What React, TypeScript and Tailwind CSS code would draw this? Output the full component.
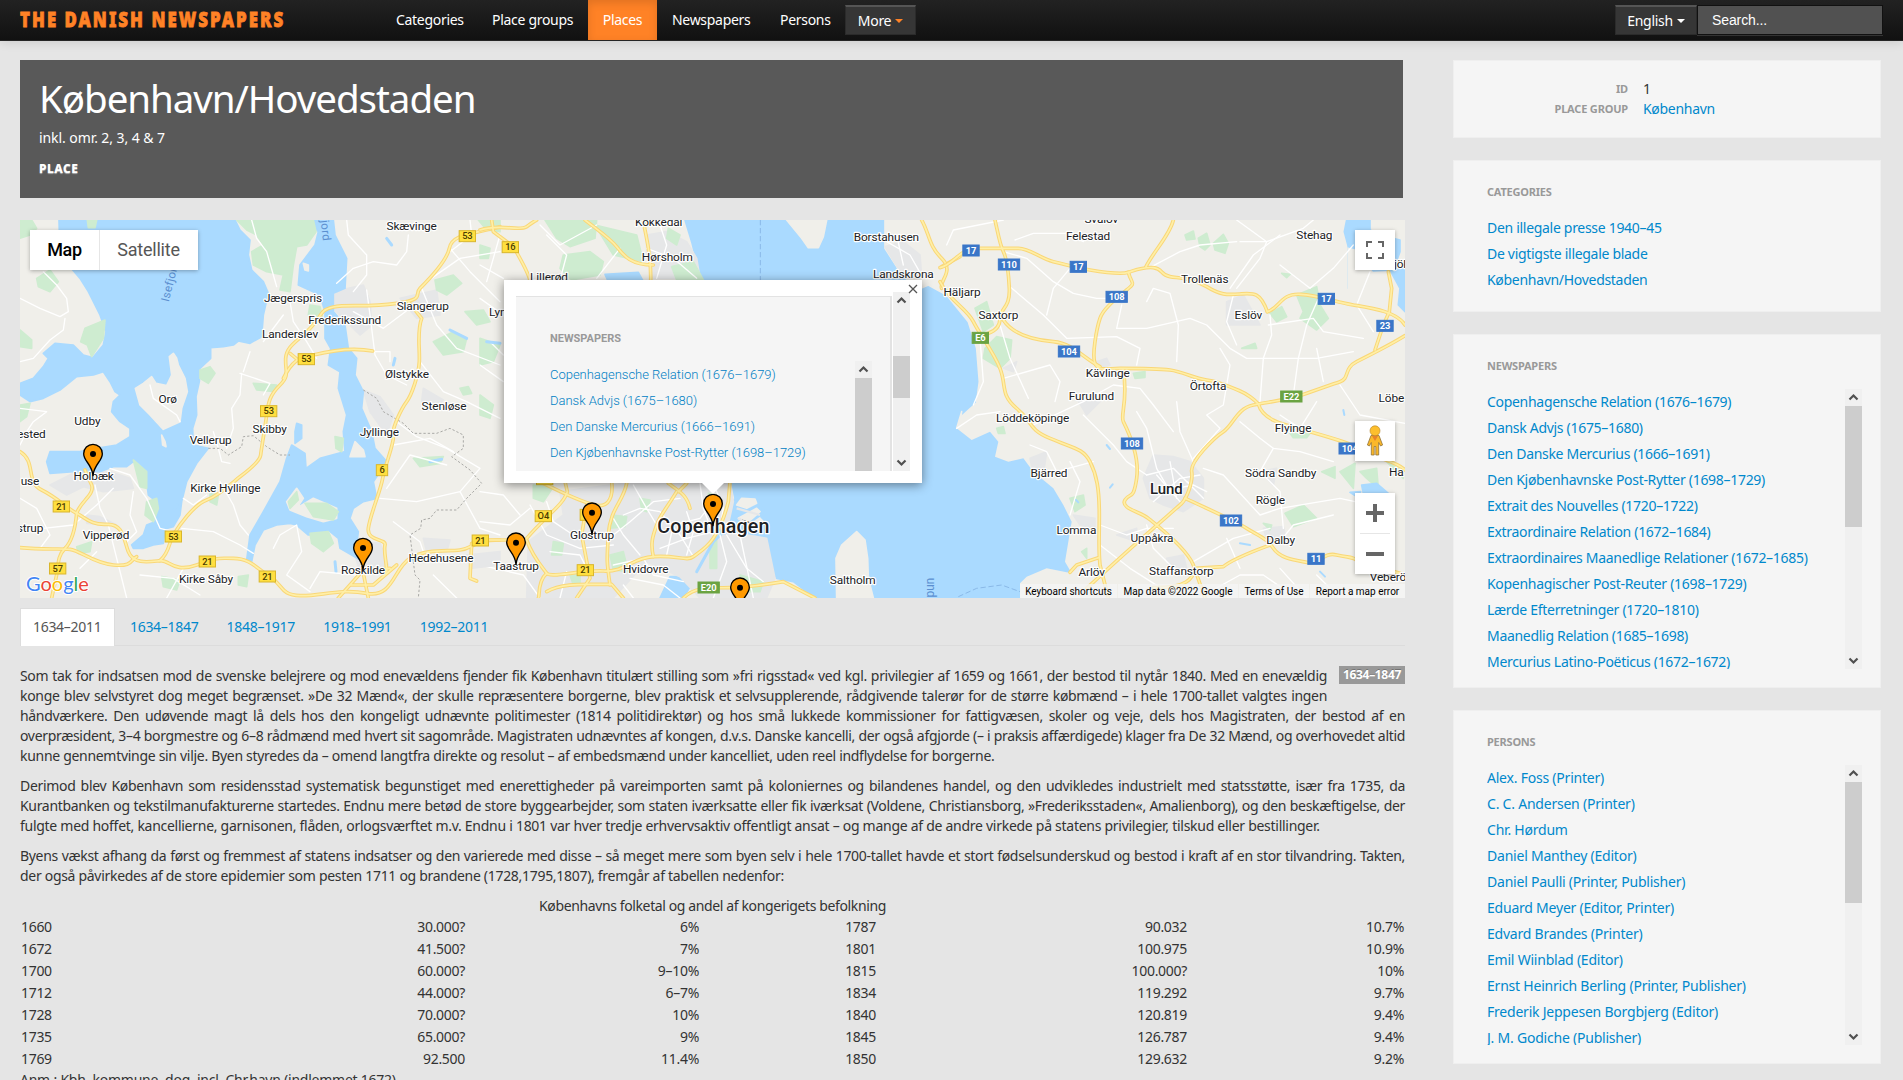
import React from "react";

type Label = [text: string, x: number, y: number];
type Shield = [text: string, x: number, y: number, kind: "y" | "b" | "g"];

/* The map is drawn on a 4155 x 1134 canvas, in three sheets with their own origins. */
const WATER_WEST = [
  "M177,15 L705,15 720,45 750,75 745,120 755,165 790,200 805,235 790,300 785,365 750,385 715,378 700,390 670,395 632,398 632,430 600,460 598,500 588,545 590,600 578,640 580,690 625,700 590,745 560,800 545,860 540,900 520,935 495,942 490,985 460,990 430,1000 400,1000 395,990 430,960 440,930 465,920 470,900 470,860 445,840 440,800 425,760 400,740 380,755 340,755 300,770 220,770 150,775 140,740 150,710 240,710 290,700 350,690 390,665 390,640 360,620 335,590 340,560 360,540 345,530 330,500 310,470 280,480 230,485 180,525 130,550 90,560 60,540 60,505 100,490 130,455 145,430 130,415 165,385 220,390 250,420 278,428 310,390 318,350 300,300 265,230 240,190 180,120 Z",
  "M920,15 L1000,15 1005,60 1040,130 1035,220 1000,235 1000,290 1035,330 1045,400 1070,430 1065,480 1090,530 1085,580 1115,650 1125,700 1160,740 1120,800 1130,850 1090,860 1060,880 1050,910 1075,950 1070,990 1090,1040 1020,1000 1015,970 985,945 960,960 925,960 890,930 870,925 830,930 790,945 765,990 755,1040 740,1035 750,960 790,890 840,800 860,730 875,690 915,715 918,760 960,730 1035,710 1030,650 1040,600 1015,520 1020,470 985,450 992,400 975,370 975,290 960,240 895,210 900,150 945,90 955,50 Z",
  "M885,650 L890,625 905,630 905,670 885,685 Z",
];
const LAND_WEST = [
  "M508,425 L520,415 530,430 535,450 555,490 562,530 545,580 540,620 490,643 450,600 420,570 406,520 430,505 455,485 468,505 500,512 515,480 Z",
  "M1050,725 L1065,680 1090,705 1095,725 Z",
  "M485,660 L495,680 498,695 488,690 Z",
  "M860,860 L890,820 910,850 890,880 940,850 1010,880 1010,910 970,920 920,905 870,885 Z",
  "M910,145 L925,150 925,168 915,165 Z",
];
const PARK_WEST = [
  "M710,15 L940,15 948,50 920,90 890,95 880,150 870,230 840,225 850,180 800,170 760,150 755,110 790,90 770,60 740,45 Z",
  "M262,15 L290,15 285,38 265,38 Z", "M60,15 L95,15 110,40 90,60 60,70 Z", "M110,190 L150,165 175,200 150,230 115,215 Z",
  "M255,340 L315,315 310,370 275,425 262,390 242,380 Z", "M60,345 L95,375 95,400 60,395 Z",
  "M600,465 L630,455 645,475 625,505 600,490 Z", "M400,735 L440,770 440,820 420,815 Z", "M440,860 L470,850 475,880 460,920 435,900 Z",
  "M915,865 L980,865 1015,890 1000,915 940,905 Z", "M930,955 L985,950 1000,985 970,1010 935,985 Z", "M865,860 L890,830 895,855 870,880 Z",
  "M1305,195 L1360,180 1385,205 1340,240 1310,225 Z", "M1300,380 L1360,350 1400,370 1390,410 1330,420 Z", "M1395,290 L1450,285 1470,320 1430,330 Z",
  "M930,270 L960,275 970,320 940,330 925,300 Z", "M60,570 L90,565 80,605 60,620 Z", "M230,995 L275,980 270,1010 235,1015 Z",
  "M1240,730 L1330,725 1320,745 1260,755 Z", "M1005,665 L1030,670 1025,710 1008,700 Z", "M760,505 L830,510 825,530 770,525 Z",
  "M485,1085 L540,1095 530,1125 490,1115 Z", "M630,830 L655,840 650,870 630,860 Z", "M715,1085 L745,1080 740,1115 715,1110 Z",
  "M1435,15 L1500,15 1500,50 1460,45 Z", "M1380,520 L1405,515 1415,535 1390,540 Z",
];
const URBAN_WEST = [
  "M150,810 L220,775 330,770 390,790 400,820 310,830 250,815 200,840 Z", "M975,235 L1090,210 1110,260 1115,330 1080,360 1030,310 1000,280 Z",
  "M1090,525 L1140,545 1180,600 1160,660 1110,590 Z", "M1050,975 L1140,985 1165,1050 1080,1070 Z", "M1270,520 L1330,555 1310,580 1265,560 Z",
  "M1200,250 L1310,225 1320,300 1250,310 Z", "M1270,970 L1350,975 1340,1010 1280,1010 Z", "M1400,1020 L1500,1010 1500,1050 1410,1060 Z", "M260,900 L300,905 350,930 260,925 Z",
];
const ROAD_WEST = [
  "M60,710 C110,740 75,800 125,825 S200,880 230,895 S270,930 320,928 S370,970 385,1010 S450,1040 480,1037 S520,1075 590,1050 S650,1030 700,1030 S770,1060 810,1085 S840,1140 900,1142 S1020,1120 1100,1135 S1180,1060 1230,1030 S1340,1010 1380,1005 S1420,975 1500,975",
  "M60,998 C130,1005 180,1000 210,1003 S280,1045 340,1050 S390,1035 410,1025", "M230,895 C225,950 215,980 195,1000 S175,1040 172,1070 L155,1149",
  "M230,895 C240,860 285,840 275,810 L255,765", "M480,1037 C510,1010 505,985 520,960 S580,870 620,855 S700,800 720,785 S780,740 782,720 S795,640 800,600 S810,540 840,510 S855,470 857,430 S900,375 935,335 S960,285 1000,276 S1100,278 1190,265 S1240,240 1260,220 S1340,140 1348,100 S1400,60 1500,35",
  "M850,490 C880,430 900,430 940,420 S1050,395 1118,408", "M870,415 L900,440", "M1225,260 L1265,310 C1250,350 1260,400 1258,440 S1235,540 1220,560 S1175,640 1180,660 S1155,750 1148,790 S1110,900 1105,940 S1160,970 1155,990 S1160,1040 1160,1070",
  "M1015,1149 L1090,1065 1170,1060 M1050,1110 L1120,1110 1190,1050 M1085,1050 L1105,1149", "M1415,985 L1410,1090 1430,1098",
];
const MINOR_WEST = [
  "M60,250 L120,280 180,305 205,290 200,250 170,210 130,170", "M60,440 L100,430 150,375 190,345 195,310", "M60,580 L140,590 100,620 80,650 60,690",
  "M755,15 L770,70 800,110 820,180 830,215", "M1040,15 L1045,60 1100,120 1100,180 1060,230", "M1010,205 L1060,160 1120,140 1190,150 1220,110 1225,60",
  "M1100,225 L1110,300 1125,420 1160,480 1220,510", "M850,300 L790,380", "M870,260 L880,320 920,380 950,430", "M725,475 L720,540 695,580 700,640 680,700",
  "M720,475 L810,505 790,540", "M750,410 L730,470", "M450,510 L460,550 530,600 540,620", "M660,800 L700,870 720,930 745,960",
  "M545,940 L640,950 720,990 760,1015", "M330,760 L390,780 440,850 480,940 520,950", "M285,810 L300,880 325,930 345,1010 380,1149",
  "M130,940 L220,930 290,870 340,820", "M60,850 L110,880 150,960 120,1000", "M240,1060 L290,1010", "M420,1080 L520,1090 600,1140",
  "M550,1060 L500,1149", "M820,1000 L840,960 890,930 905,1010 860,1080 930,1130", "M930,1120 L960,1070 1070,1080", "M1140,850 L1250,860 1380,830 1440,760 1340,700 1250,665 1190,620",
  "M1180,690 L1290,670 1360,710", "M1160,820 L1230,720 1340,750", "M1180,920 L1260,980 1280,1040", "M1260,440 L1330,530 1400,560 1500,610",
  "M1265,220 L1310,330 1370,400 1500,450", "M1350,100 L1410,170 1500,260", "M1280,200 L1380,130 1500,110", "M1230,280 L1150,340 1060,290",
  "M1410,15 L1415,60 1350,110", "M1120,410 L1170,410 1170,440", "M1300,1080 L1370,1149", "M400,830 L390,900 410,950 380,980", "M550,850 L580,870 620,840", "M1380,830 L1440,940 1500,960", "M640,650 L655,700 665,740 690,745",
];
const WATER_EAST = [
  "M615,15 L2600,15 2600,220 1380,220 1420,265 1465,320 1490,400 1498,500 1490,560 1440,605 1430,640 1475,675 1530,650 1555,680 1545,725 1585,740 1630,730 1660,770 1720,820 1750,870 1775,920 1765,980 1755,1040 1775,1075 1700,1060 1640,1085 1620,1105 1620,1149 1005,1149 940,1100 890,1090 860,1030 850,985 830,960 760,960 740,930 755,870 765,850 755,800 720,500 660,180 635,80 Z",
  "M540,1149 L570,1085 600,1085 645,1090 610,1149 Z", "M375,178 L475,172 490,200 385,200 Z", "M640,1060 L700,975 690,1000 650,1060 Z",
];
const LAND_EAST = [
  "M1215,15 L2600,15 2600,600 1490,560 1498,500 1490,400 1465,320 1420,265 1400,240 1345,210 1310,225 1260,170 1215,100 Z",
  "M920,15 L1040,15 1030,65 1015,98 985,98 965,70 Z", "M1070,1149 L1068,1030 1085,990 1130,950 1155,975 1163,1030 1165,1090 1180,1149 Z",
  "M770,870 L785,850 825,852 830,865 800,880 Z", "M775,910 L830,880 840,890 800,925 Z", "M815,925 L845,905 850,915 830,935 Z", "M1430,640 L1445,590 1440,620 Z",
];
const PARK_EAST = [
  "M195,15 L350,15 345,70 270,95 230,70 Z", "M250,120 L330,110 370,140 360,180 275,195 240,160 Z", "M345,30 L470,60 490,140 400,120 Z", "M575,155 L640,140 670,195 590,195 Z",
  "M565,40 L600,60 590,90 560,70 Z", "M0,90 L30,100 25,130 0,130 Z", "M0,370 L60,390 40,440 0,450 Z", "M390,1020 L430,1010 445,1070 400,1065 Z",
  "M395,900 L440,905 435,935 385,940 Z", "M480,850 L510,855 500,890 485,885 Z", "M270,1080 L300,1080 300,1110 280,1110 Z", "M780,1080 L850,1100 840,1130 790,1130 Z",
  "M0,540 L40,570 30,610 0,600 Z", "M160,810 L220,815 190,860 160,850 Z", "M220,980 L250,985 245,1020 215,1020 Z", "M685,835 L710,840 705,865 690,860 Z", "M690,990 L710,960 710,1060 690,1060 Z",
];
const URBAN_EAST = [
  "M140,1149 L145,980 250,900 240,830 430,805 750,805 760,860 740,950 860,970 885,1090 860,1149 660,1149 600,1085 500,1040 400,1149 Z", "M500,60 L560,50 620,80 650,130 660,190 520,190 500,120 Z",
  "M1215,95 L1270,80 1320,120 1325,185 1260,170 Z",
];
const ROAD_EAST = [
  "M0,45 C60,25 120,50 140,35 S160,20 170,15", "M35,15 L40,50 100,95 C120,130 150,180 150,200", "M315,15 C360,50 390,70 410,95 S450,150 520,150", "M490,15 C495,60 515,110 512,200",
  "M1325,15 C1350,60 1345,90 1385,130 S1375,200 1385,220", "M1385,155 L1440,125", "M140,970 C200,900 250,870 262,830 L255,800", "M0,975 L140,975 C160,1030 190,1060 200,1075 S300,1065 370,1068 S450,1030 520,1025 S620,1040 640,1025 S680,1000 700,970 S735,900 745,860 L750,800",
  "M200,1075 C170,1100 180,1149 175,1149", "M200,1130 C250,1100 330,1110 395,1108 L430,1149", "M440,805 C430,860 390,880 385,960 S380,1040 390,1110", "M190,805 C240,830 300,860 345,870 S400,840 395,800",
  "M590,830 C560,880 540,900 530,930 S510,980 520,1025", "M565,805 C600,830 620,840 630,880 M620,805 L595,830", "M290,1149 L330,1090 305,960 320,870", "M610,1149 C650,1110 700,1120 750,1118 S850,1110 910,1100 L1005,1149",
];
const MINOR_EAST = [
  "M430,900 L480,880 540,890 600,960 640,1025", "M400,960 L450,920 520,860 600,850", "M460,810 L500,880 530,930", "M480,1020 L430,960 400,910", "M560,1020 L580,930 660,910 700,860",
  "M660,805 L670,880 700,960", "M700,805 L730,880 720,940", "M540,1000 L620,970 700,950", "M620,890 L640,950 620,1020", "M150,870 L200,960 300,1000 400,990", "M210,1010 L300,1020 320,1060",
  "M240,1149 L260,1070", "M430,1110 L460,1149", "M450,1090 L550,1110 600,1149", "M700,1149 L740,1040 720,960", "M740,960 L800,1060 850,1100", "M780,960 L820,1149", "M200,860 L220,920 280,960",
  "M0,1050 L130,1080 180,1149", "M0,920 L90,930 150,880", "M0,830 L70,840 120,900", "M0,150 L70,190", "M200,60 L260,120 240,195", "M60,60 L20,200", "M180,30 L240,90 350,30", "M420,100 L350,190",
  "M500,100 L580,130 650,190", "M540,30 L560,90 530,190", "M1220,80 L1290,120 1330,190", "M1250,60 L1270,150", "M0,250 L70,300", "M0,450 L70,500", "M30,380 L70,420", "M400,1050 L490,1030 520,1080 610,1100",
];
const PARK_FAR = [
  "M735,60 L760,48 765,72 740,75 Z", "M775,70 L800,55 810,90 795,105 780,95 Z", "M820,85 L850,58 865,85 855,115 825,105 Z", "M1070,240 L1130,215 1140,270 1165,310 1130,345 1080,310 1090,290 Z",
  "M990,295 L1025,275 1040,305 1010,320 Z", "M135,400 L170,365 215,375 210,430 180,460 130,430 Z", "M105,280 L140,260 160,330 130,350 Z", "M580,475 L615,470 615,487 585,490 Z", "M1035,895 L1090,870 1130,910 1060,935 Z",
  "M1145,770 L1185,755 1185,790 Z", "M1200,770 L1245,745 1240,820 Z", "M1260,770 L1310,760 1315,820 1280,790 Z", "M390,850 L430,840 435,870 405,890 Z", "M905,400 L945,385 950,400 Z",
  "M970,925 L995,930 990,945 Z", "M425,1010 L440,1000 440,1030 Z", "M1050,655 L1110,655 1100,668 1060,668 Z", "M170,640 L190,635 195,655 175,655 Z", "M1340,740 L1390,770 1390,790 Z", "M1025,175 L1050,178 1040,188 Z",
];
const URBAN_FAR = [
  "M610,790 L640,720 700,725 750,740 790,790 790,850 730,890 670,870 630,850 Z", "M860,260 L910,240 960,330 860,330 Z", "M270,730 L320,710 310,780 280,780 Z", "M400,900 L465,910 465,940 420,930 Z",
  "M530,960 L590,940 590,980 Z", "M680,1030 L730,1020 740,1060 690,1060 Z", "M970,940 L1030,935 1040,980 980,970 Z", "M960,770 L1010,760 1000,810 Z", "M410,550 L480,560 440,600 Z", "M190,460 L230,440 220,470 Z", "M470,440 L500,430 510,450 480,460 Z",
];
const WATER_FAR = [
  "M1220,15 L1290,15 1290,45 1320,60 1380,75 1380,110 1360,165 1300,168 1245,100 1225,95 1213,50 Z", "M1350,165 L1395,160 1395,290 1375,270 1380,220 Z", "M1265,810 L1310,805 1345,835 1270,835 Z", "M1230,832 L1262,830 1250,845 Z",
];
const ROAD_FAR = [
  "M0,158 C40,150 60,100 110,100 S200,100 235,100 S300,130 340,140 S420,160 450,165 S540,180 565,172 S610,155 640,158 S660,180 690,185 S760,190 800,215 S860,240 900,237 S960,230 982,290",
  "M982,290 C1020,280 1020,235 1080,238 S1180,260 1240,270 S1370,290 1395,330", "M165,15 C175,60 180,90 190,110 S205,160 208,220 S180,280 180,310 S160,350 145,355",
  "M0,200 C30,260 80,280 100,320 S160,410 180,460 S180,540 230,580 S260,640 330,670 S430,700 450,740 S478,820 478,900 S475,1000 480,1050 L505,1149",
  "M700,15 C690,60 640,110 618,155", "M565,172 C575,210 590,200 560,225 S490,280 480,310 S455,420 465,445 S500,460 540,460 S650,460 690,465 S760,490 800,495 S880,520 900,528 S945,555 955,567",
  "M190,315 C220,360 280,375 340,380 S430,430 480,455", "M550,465 C565,560 540,600 550,620 S600,720 590,790 S570,830 555,855 S600,890 625,910 S740,1000 760,1050 L795,1149",
  "M1395,362 C1350,390 1290,420 1250,440 S1230,490 1200,500 S1130,525 1085,540 S990,560 940,570 S880,630 850,650 S750,740 755,770 S740,850 725,865 S590,980 440,1120",
  "M955,567 C970,620 1040,630 1110,650 S1250,690 1280,710 S1370,740 1395,765", "M735,850 C800,880 880,915 920,940 S980,970 1000,1000 S1060,1035 1100,1042 S1150,1010 1190,1020 S1230,1020 1260,1040 L1380,1075",
  "M990,990 C950,1005 880,1030 850,1055 L765,1060 C760,1090 740,1120 640,1118", "M475,1028 L410,1050 390,1072", "M1345,170 L1355,220 1348,290 1330,330 1305,405",
];
const MINOR_FAR = [
  "M20,90 L40,45 190,15", "M190,110 L260,130 340,200 400,235 470,250 545,250", "M225,75 L280,55 380,55 430,80", "M390,160 L340,220 320,300", "M210,215 L310,300 380,370 530,365 600,400 590,450",
  "M620,260 L640,220 690,235 715,330 710,440", "M545,270 L530,340 620,340 750,310 800,330 870,400 920,430 1130,430 1240,410", "M880,240 L860,320 890,390", "M990,300 L995,360 970,430 960,560",
  "M985,330 L1120,310 1150,350 1270,370", "M1060,540 L1075,430 1100,330 1140,240", "M1130,400 L1150,500", "M625,160 L720,110 780,90 890,80", "M900,80 L980,80 1090,40 1120,15", "M870,220 L940,120 1020,60",
  "M890,15 L980,80 960,130 890,220", "M1020,150 L1110,220 1180,160 1240,90", "M180,330 L210,430 265,550", "M120,370 L130,500 100,570", "M190,490 L330,450 360,500 345,560", "M280,630 L430,560 520,510 600,520 640,570 700,650",
  "M430,600 L520,690 560,740 620,780", "M590,590 L620,640 650,760 690,830", "M620,780 L700,760 790,850", "M640,860 L720,790 780,780", "M650,780 L720,860 M660,830 L760,810 M690,740 L710,850 M740,800 L800,830", "M790,760 L850,780 960,900 1020,880 1200,850 1245,860",
  "M710,560 L720,650 760,740", "M760,730 L840,640 800,600 850,570 870,450 840,400", "M900,620 L960,670 1000,700 1080,710 1180,740", "M1000,700 L960,770 1020,830 1030,940", "M1020,600 L1080,640 1130,560",
  "M1200,510 L1260,600 1395,625", "M460,740 L350,770 320,710 270,690", "M480,930 L560,960 620,940 700,940", "M480,990 L570,1060 680,1130", "M620,930 L640,1000 700,1060 760,1080", "M760,1040 L880,970 990,940",
  "M810,1130 L900,1080 970,1080 1070,1149", "M1020,1060 L1100,1149", "M1200,1149 L1130,1080", "M390,900 L420,800 390,740", "M50,640 L110,600 180,590", "M1290,170 L1250,270 1300,350", "M1020,980 L1060,930 1180,900", "M860,970 L900,1060",
];

const LABELS_WEST: Label[] = [
  ["Skævinge", 1235, 45], ["Jægerspris", 879, 262], ["Slangerup", 1268, 286], ["Frederikssund", 1034, 327], ["Landerslev", 870, 370], ["Ølstykke", 1221, 490],
  ["Stenløse", 1332, 586], ["Orø", 503, 565], ["Udby", 262, 631], ["ested", 94, 670], ["Skibby", 809, 655], ["Vellerup", 632, 688], ["Jyllinge", 1138, 664],
  ["Holbæk", 281, 796], ["use", 90, 811], ["Kirke Hyllinge", 676, 832], ["strup", 90, 950], ["Vipperød", 318, 973], ["Hedehusene", 1323, 1042], ["Roskilde", 1089, 1078], ["Kirke Såby", 618, 1105],
];
const LABELS_EAST: Label[] = [
  ["Kokkedal", 536, 34], ["Hørsholm", 562, 139], ["Lillerød", 207, 198], ["Lynge", 72, 304], ["Borstahusen", 1219, 79], ["Landskrona", 1270, 190],
  ["Glostrup", 336, 973], ["Taastrup", 108, 1064], ["Hvidovre", 497, 1075], ["Saltholm", 1118, 1108],
];
const LABELS_FAR: Label[] = [
  ["Svalöv", 484, 24], ["Felestad", 444, 76], ["Stehag", 1123, 73], ["Häljarp", 66, 244], ["Saxtorp", 175, 313], ["Trollenäs", 794, 205], ["Eslöv", 925, 313], ["Kävlinge", 503, 487],
  ["Örtofta", 804, 525], ["Furulund", 454, 556], ["Löddeköpinge", 278, 622], ["Löbe", 1354, 562], ["Flyinge", 1059, 652], ["Bjärred", 327, 787], ["Södra Sandby", 1022, 787], ["Ha", 1369, 784],
  ["Rögle", 991, 868], ["Lomma", 409, 958], ["Uppåkra", 636, 982], ["Dalby", 1022, 988], ["Arlöv", 455, 1083], ["Staffanstorp", 724, 1081], ["Veberö", 1344, 1098], ["jöl", 1380, 160],
];
const SHIELDS_WEST: Shield[] = [
  ["53", 1402, 63, "y"], ["53", 919, 432, "y"], ["53", 806, 588, "y"], ["6", 1146, 765, "y"], ["21", 184, 874, "y"], ["53", 520, 964, "y"], ["21", 1441, 976, "y"], ["21", 622, 1039, "y"], ["57", 173, 1060, "y"], ["21", 802, 1084, "y"],
];
const SHIELDS_EAST: Shield[] = [["16", 91, 96, "y"], ["O4", 190, 903, "y"], ["21", 316, 1065, "y"], ["", 325, 899, "y"], ["", 194, 792, "y"], ["E20", 686, 1117, "g"]];
const SHIELDS_FAR: Shield[] = [
  ["17", 93, 106, "b"], ["110", 207, 148, "b"], ["17", 415, 155, "b"], ["108", 530, 245, "b"], ["17", 1159, 251, "b"], ["23", 1335, 332, "b"], ["E6", 121, 368, "g"], ["104", 387, 409, "b"],
  ["E22", 1054, 544, "g"], ["108", 576, 685, "b"], ["104", 1229, 700, "b"], ["102", 873, 916, "b"], ["11", 1128, 1031, "b"],
];

function Areas({ d, fill }: { d: string[]; fill: string }) {
  return <>{d.map((p, i) => <path key={i} d={p} fill={fill} stroke={fill} strokeWidth="5" strokeLinejoin="round" />)}</>;
}
function Lines({ d, color, width }: { d: string[]; color: string; width: number }) {
  return <>{d.map((p, i) => <path key={i} d={p} fill="none" stroke={color} strokeWidth={width} strokeLinejoin="round" strokeLinecap="round" />)}</>;
}
function Roads({ d }: { d: string[] }) {
  return (
    <>
      <Lines d={d} color="#f9d778" width={11} />
      <Lines d={d} color="#ffefa6" width={5} />
    </>
  );
}
function Labels({ items }: { items: Label[] }) {
  return (
    <g fontFamily="Roboto, sans-serif" fontSize="35.5" fill="#202124" stroke="#fff" strokeWidth="7" strokeLinejoin="round" paintOrder="stroke" textAnchor="middle">
      {items.map(([t, x, y]) => <text key={t} x={x} y={y}>{t}</text>)}
    </g>
  );
}
const SHIELD_COLOR = { y: ["#ffdf40", "#d9b62c", "#4a3c00"], b: ["#3a76c8", "#3a76c8", "#fff"], g: ["#6ba342", "#6ba342", "#fff"] };
function Shields({ items }: { items: Shield[] }) {
  return (
    <g fontFamily="Roboto, sans-serif" fontSize="28" textAnchor="middle">
      {items.map(([t, x, y, k], i) => {
        const w = t.length === 1 ? 34 : t.length === 3 ? 64 : 49;
        const c = SHIELD_COLOR[k];
        return (
          <g key={i}>
            <rect x={x - w / 2} y={y - 16} width={w} height="33" fill={c[0]} stroke={c[1]} strokeWidth="3" />
            {t && <text x={x} y={y + 10} fill={c[2]} fontWeight={k === "y" ? 500 : 700}>{t}</text>}
          </g>
        );
      })}
    </g>
  );
}
function Pins({ at }: { at: [number, number][] }) {
  return (
    <>
      {at.map(([x, y], i) => (
        <g key={i} transform={`translate(${x} ${y})`}>
          <path d="M0,65 C-3,30 -28,22 -28,-1 A28,28 0 0 1 28,-1 C28,22 3,30 0,65 Z" fill="#ff9900" stroke="#000" strokeWidth="4" strokeLinejoin="round" />
          <circle r="9" fill="#000" />
        </g>
      ))}
    </>
  );
}

const WEST = "translate(-60 -15)";
const EAST = "translate(1380 -15)";
const FAR = "translate(2760 -15)";

function MapCanvas() {
  return (
    <svg viewBox="0 0 4155 1134" preserveAspectRatio="none" className="block h-full w-full">
      <rect width="4155" height="1134" fill="#f0efea" />
      <g transform={EAST}>
        <Areas d={WATER_EAST} fill="#aadaff" />
        <Areas d={LAND_EAST} fill="#f0efea" />
        <path d="M2600,15 V1149 H1860 L1620,1149 1620,1105 1640,1085 1700,1060 1775,1075 1755,1040 1765,980 1775,920 1750,870 1720,820 1660,770 1630,730 1585,740 1545,725 1555,680 1530,650 1475,675 1430,640 1440,605 1490,560 1498,500 1490,400 1465,320 1420,265 1800,15 Z" fill="#f0efea" />
        <Areas d={URBAN_EAST} fill="#e6e7e8" />
        <Areas d={PARK_EAST} fill="#ceecd0" />
        <path d="M775,910 L800,925 835,930 M770,880 L840,900" stroke="#e6e7e8" strokeWidth="7" />
        <Lines d={["M650,1070 L700,980 730,950", "M860,960 L870,930 845,905 850,880", "M700,935 L735,955"]} color="#aadaff" width={9} />
        <Lines d={MINOR_EAST} color="#fff" width={4} />
        <path d="M841,15 V200" stroke="#8ab9e8" strokeWidth="3" strokeDasharray="16 8" />
      </g>
      <g transform={WEST}>
        <Areas d={URBAN_WEST} fill="#e6e7e8" />
        <Areas d={WATER_WEST} fill="#aadaff" />
        <Areas d={LAND_WEST} fill="#f0efea" />
        <Areas d={PARK_WEST} fill="#ceecd0" />
        <Lines d={["M1160,70 L1175,90", "M1350,345 L1400,370", "M1460,380 L1500,385", "M1185,430 L1180,450", "M1290,740 L1325,733", "M1255,1020 L1240,1035", "M1005,1040 L1008,1070", "M520,890 L530,870"]} color="#aadaff" width={9} />
        <Lines d={MINOR_WEST} color="#fff" width={4} />
        <path d="M1090,525 L1130,550 1150,590 1210,625 1240,655 1310,655 1350,640 1390,660 1390,700 1355,725 1410,765 1445,805 1400,850 1370,885 1310,885 1290,910 1265,915 1262,940 1230,960 1245,1080 1260,1095 1255,1149 M625,700 L660,700 685,720 725,695 730,665 760,662 800,695 840,720 870,720" fill="none" stroke="#a9a9a6" strokeWidth="3" strokeDasharray="7 6" />
        <Roads d={ROAD_WEST} />
      </g>
      <g transform={EAST}>
        <Roads d={ROAD_EAST} />
      </g>
      <g transform={FAR}>
        <Areas d={URBAN_FAR} fill="#e6e7e8" />
        <Areas d={PARK_FAR} fill="#ceecd0" />
        <Areas d={WATER_FAR} fill="#aadaff" />
        <Lines d={MINOR_FAR} color="#fff" width={4} />
        <Lines d={["M500,690 L510,702", "M408,855 L415,862", "M510,818 L518,808", "M900,985 L930,990", "M1210,585 L1213,600", "M1140,1070 L1155,1085"]} color="#aadaff" width={6} />
        <path d="M55,1145 L110,1120 185,1110 240,1130" fill="none" stroke="#8ab9e8" strokeWidth="3" strokeDasharray="16 8" />
        <Roads d={ROAD_FAR} />
      </g>
      <g transform={WEST}>
        <Shields items={SHIELDS_WEST} />
        <Labels items={LABELS_WEST} />
        <g fontFamily="Roboto, sans-serif" fontSize="35" fill="#5b8fd0" letterSpacing="1">
          <text transform="translate(506 262) rotate(-76)">Isefjord</text>
          <text transform="translate(960 -4) rotate(84)">Fjord</text>
        </g>
        <Pins at={[[279, 717], [1089, 999]]} />
        <text x="78" y="1128" fontFamily="Lato, sans-serif" fontSize="60" textLength="188" stroke="#fff" strokeWidth="6" paintOrder="stroke">
          <tspan fill="#4285f4">G</tspan><tspan fill="#ea4335">o</tspan><tspan fill="#fbbc04">o</tspan><tspan fill="#4285f4">g</tspan><tspan fill="#34a853">l</tspan><tspan fill="#ea4335">e</tspan>
        </text>
      </g>
      <g transform={EAST}>
        <Shields items={SHIELDS_EAST} />
        <Labels items={LABELS_EAST} />
        <text x="700" y="953" fontFamily="Roboto, sans-serif" fontWeight="500" fontSize="59" textLength="336" fill="#202124" stroke="#fff" strokeWidth="7" paintOrder="stroke" textAnchor="middle">Copenhagen</text>
        <text transform="translate(1342 1088) rotate(90)" fontFamily="Roboto, sans-serif" fontSize="36" fill="#5b8fd0">und</text>
        <Pins at={[[108, 983], [336, 893], [699, 867], [780, 1118]]} />
      </g>
      <g transform={FAR}>
        <Shields items={SHIELDS_FAR} />
        <Labels items={LABELS_FAR} />
        <text x="679" y="837" fontFamily="Roboto, sans-serif" fontWeight="500" fontSize="45" fill="#202124" stroke="#fff" strokeWidth="7" paintOrder="stroke" textAnchor="middle">Lund</text>
      </g>
    </svg>
  );
}

function Chevron({ up }: { up?: boolean }) {
  return (
    <svg viewBox="0 0 17 17" className="block h-[17px] w-[17px] shrink-0">
      <path d={up ? "M4.5 10.5 L8.5 6.5 L12.5 10.5" : "M4.5 6.5 L8.5 10.5 L12.5 6.5"} fill="none" stroke="#505050" strokeWidth="2.2" />
    </svg>
  );
}

function PlaceMap() {
  return (
    <div className="relative mt-[22px] h-[378px] w-[1385px] overflow-hidden bg-[#f0efea]">
      <MapCanvas />
      <div className="absolute left-[10px] top-[10px] flex h-10 bg-white font-['Roboto',sans-serif] text-[18px] leading-10 shadow-[0_1px_4px_rgba(0,0,0,0.3)]">
        <div className="w-[69px] text-center font-medium text-black">Map</div>
        <div className="w-[99px] border-l border-[#e6e6e6] pr-px text-center tracking-[-0.2px] text-[#565656]">Satellite</div>
      </div>

      <div className="absolute right-[10px] top-[10px] flex h-10 w-10 items-center justify-center bg-white shadow-[0_1px_4px_rgba(0,0,0,0.3)]">
        <svg viewBox="0 0 18 18" className="h-[18px] w-[18px]"><path d="M1 6V1h5M12 1h5v5M17 12v5h-5M6 17H1v-5" fill="none" stroke="#666" strokeWidth="2" /></svg>
      </div>
      <div className="absolute right-[10px] top-[201px] flex h-10 w-10 items-center justify-center bg-white shadow-[0_1px_4px_rgba(0,0,0,0.3)]">
        <svg viewBox="0 0 18 32" className="h-8 w-[18px]">
          <path d="M5 10.5h8l3.6 9.5-2 1-1.9-3.5V30H9.8v-8.5H8.2V30H5.3V17.5L3.4 21l-2-1z" fill="#fbb829" stroke="#8f7238" strokeWidth="0.8" />
          <path d="M5.7 10.5h6.6L9 16z" fill="#e8832a" />
          <circle cx="9" cy="5.8" r="5" fill="#fdbf2d" stroke="#b3832a" strokeWidth="0.6" />
        </svg>
      </div>
      <div className="absolute right-[10px] top-[273px] flex h-[81px] w-10 flex-col items-center bg-white shadow-[0_1px_4px_rgba(0,0,0,0.3)]">
        <svg viewBox="0 0 18 18" className="my-[11px] h-[18px] w-[18px]"><path d="M0 9h18M9 0v18" stroke="#666" strokeWidth="4" /></svg>
        <div className="h-px w-[30px] bg-[#e6e6e6]" />
        <svg viewBox="0 0 18 18" className="my-[11px] h-[18px] w-[18px]"><path d="M0 9h18" stroke="#666" strokeWidth="4" /></svg>
      </div>

      <div className="absolute bottom-0 right-0 flex h-[14px] gap-px font-['Roboto',sans-serif] text-[10px] leading-[16px] tracking-[0px] text-black">
        <span className="w-[97px] bg-[#f5f5f5]/80 text-center">Keyboard shortcuts</span>
        <span className="w-[120px] bg-[#f5f5f5]/80 text-center">Map data ©2022 Google</span>
        <span className="w-[70px] bg-[#f5f5f5]/80 text-center">Terms of Use</span>
        <span className="w-[95px] bg-[#f5f5f5]/80 text-center">Report a map error</span>
      </div>

      <div className="absolute left-[484px] top-[60px] h-[203px] w-[418px] bg-white shadow-[0_2px_10px_rgba(0,0,0,0.45)]">
        <div className="ml-3 mt-3 flex h-[179px]">
          <div className="mt-1 flex w-[376px] justify-between overflow-hidden border-r-2 border-t border-[#e3e3e3] bg-[#f5f5f5] pl-[34px] font-['Roboto',sans-serif]">
            <div className="pt-8">
              <h3 className="text-[11px] font-bold leading-5 tracking-[0px] text-[#999]">NEWSPAPERS</h3>
              <ul className="mt-[13px] whitespace-nowrap text-[13px] font-light leading-[26px] tracking-[-0.02px] text-[#0080c4]">
                {NEWSPAPERS.slice(0, 4).map((n) => <li key={n}>{n}</li>)}
              </ul>
            </div>
            <div className="mr-[18px] mt-[64px] w-[17px] bg-[#cdcdcd]">
              <div className="bg-[#f0f0f0]"><Chevron up /></div>
            </div>
          </div>
          <div className="ml-px flex w-[17px] flex-col bg-[#f0f0f0]">
            <Chevron up />
            <div className="mt-[47px] h-[42px] bg-[#cdcdcd]" />
            <div className="mt-auto"><Chevron /></div>
          </div>
        </div>
        <svg viewBox="0 0 10 10" className="absolute right-[4px] top-[4px] h-[10px] w-[10px]"><path d="M1 1l8 8M9 1L1 9" stroke="#555" strokeWidth="1.3" /></svg>
        <svg viewBox="0 0 24 12" className="absolute left-[197px] top-[202px] h-3 w-6"><path d="M0 0h24L12 12z" fill="#fff" /></svg>
      </div>
    </div>
  );
}

const NEWSPAPERS = [
  "Copenhagensche Relation (1676–1679)", "Dansk Advjs (1675–1680)", "Den Danske Mercurius (1666–1691)", "Den Kjøbenhavnske Post-Rytter (1698–1729)", "Extrait des Nouvelles (1720–1722)",
  "Extraordinaire Relation (1672–1684)", "Extraordinaires Maanedlige Relationer (1672–1685)", "Kopenhagischer Post-Reuter (1698–1729)", "Lærde Efterretninger (1720–1810)", "Maanedlig Relation (1685–1698)", "Mercurius Latino-Poëticus (1672–1672)",
];
const PERSONS = [
  "Alex. Foss (Printer)", "C. C. Andersen (Printer)", "Chr. Hørdum", "Daniel Manthey (Editor)", "Daniel Paulli (Printer, Publisher)", "Eduard Meyer (Editor, Printer)",
  "Edvard Brandes (Printer)", "Emil Wiinblad (Editor)", "Ernst Heinrich Berling (Printer, Publisher)", "Frederik Jeppesen Borgbjerg (Editor)", "J. M. Godiche (Publisher)",
];
const CATEGORIES = ["Den illegale presse 1940–45", "De vigtigste illegale blade", "København/Hovedstaden"];

function ListCard({ title, items, scroll, listClass = "" }: { title: string; items: string[]; scroll?: boolean; listClass?: string }) {
  return (
    <section className="border border-[#efefef] bg-[#f5f5f5] pl-[33px] pt-[21px]">
      <h3 className="text-[11px] font-bold leading-5 tracking-[-0.22px] text-[#999]">{title}</h3>
      <div className={scroll ? "mb-[18px] mt-[13px] flex h-[280px] justify-between overflow-hidden" : "mb-[18px] mt-[13px] h-[78px]"}>
        <ul className={`leading-[26px] text-[#0088cc] ${listClass}`}>
          {items.map((n) => <li key={n}>{n}</li>)}
        </ul>
        {scroll && (
          <div className="mr-[18px] flex w-[17px] flex-col bg-[#f0f0f0]">
            <Chevron up />
            <div className="h-[121px] bg-[#cdcdcd]" />
            <div className="mt-auto"><Chevron /></div>
          </div>
        )}
      </div>
    </section>
  );
}

const P1 = [
  "konge blev selvstyret dog meget begrænset. »De 32 Mænd«, der skulle repræsentere borgerne, blev praktisk et selvsupplerende, rådgivende talerør for de større købmænd – i hele 1700-tallet valgtes ingen",
  "håndværkere. Den udøvende magt lå dels hos den kongeligt udnævnte politimester (1814 politidirektør) og hos små lukkede kommissioner for fattigvæsen, skoler og veje, dels hos Magistraten, der bestod af en",
  "overpræsident, 3–4 borgmestre og 6–8 rådmænd med hvert sit sagområde. Magistraten udnævntes af kongen, d.v.s. Danske kancelli, der også afgjorde (– i praksis affærdigede) klager fra De 32 Mænd, og overhovedet altid",
  "kunne gennemtvinge sin vilje. Byen styredes da – omend langtfra direkte og resolut – af embedsmænd under kancelliet, uden reel indflydelse for borgerne.",
];
const P2 = [
  "Derimod blev København som residensstad systematisk begunstiget med enerettigheder på vareimporten samt på koloniernes og bilandenes handel, og den udvikledes industrielt med statsstøtte, især fra 1735, da",
  "Kurantbanken og tekstilmanufakturerne startedes. Endnu mere betød de store byggearbejder, som staten iværksatte eller fik iværksat (Voldene, Christiansborg, »Frederiksstaden«, Amalienborg), og den beskæftigelse, der",
  "fulgte med hoffet, kancellierne, garnisonen, flåden, orlogsværftet m.v. Endnu i 1801 var hver tredje erhvervsaktiv offentligt ansat – og mange af de andre virkede på statens privilegier, tilskud eller bestillinger.",
];
const P3 = [
  "Byens vækst afhang da først og fremmest af statens indsatser og den varierede med disse – så meget mere som byen selv i hele 1700-tallet havde et stort fødselsunderskud og bestod i kraft af en stor tilvandring. Takten,",
  "der også påvirkedes af de store epidemier som pesten 1711 og brandene (1728,1795,1807), fremgår af tabellen nedenfor:",
];
const ROWS = [
  ["1660", "30.000?", "6%", "1787", "90.032", "10.7%"], ["1672", "41.500?", "7%", "1801", "100.975", "10.9%"], ["1700", "60.000?", "9–10%", "1815", "100.000?", "10%"],
  ["1712", "44.000?", "6–7%", "1834", "119.292", "9.7%"], ["1728", "70.000?", "10%", "1840", "120.819", "9.4%"], ["1735", "65.000?", "9%", "1845", "126.787", "9.4%"], ["1769", "92.500", "11.4%", "1850", "129.632", "9.2%"],
];

function Line({ text, last, narrow, loose }: { text: string; last?: boolean; narrow?: boolean; loose?: boolean }) {
  return (
    <span className={`block whitespace-nowrap leading-5 ${narrow ? "w-[1307px]" : "w-[1385px]"} ${loose ? "tracking-[-0.275px]" : last ? "" : "tracking-[-0.32px] [text-align-last:justify]"}`}>{text}</span>
  );
}

function Caret({ className }: { className: string }) {
  return <span className={`ml-1 inline-block border-x-4 border-t-4 border-x-transparent align-[3px] ${className}`} />;
}

export default function App() {
  return (
    <div className="h-[1080px] overflow-hidden bg-[#e5e5e5] font-['Noto_Sans','Open_Sans',sans-serif] text-[14px] leading-5 tracking-[-0.3px] text-[#333]">
      <header className="relative flex h-[41px] items-start border-b border-[#252525] bg-gradient-to-b from-[#222] to-[#111] text-white shadow-[0_1px_10px_rgba(0,0,0,0.12)]">
        <div className="w-[360px] pl-5">
          <span className="inline-block origin-left scale-x-[0.8] whitespace-nowrap text-[21px] font-black leading-[39px] tracking-[2.56px] text-[#ff8226] [-webkit-text-stroke:0.8px_#ff8226]">THE DANISH NEWSPAPERS</span>
        </div>
        <nav className="ml-[20px] flex leading-10">
          <span className="w-[97px] pl-4">Categories</span>
          <span className="w-[111px] pl-[15px]">Place groups</span>
          <span className="h-10 w-[69px] bg-[#ff8226] text-center shadow-[inset_0_3px_8px_rgba(0,0,0,0.125)]">Places</span>
          <span className="w-[108px] pl-[15px]">Newspapers</span>
          <span className="w-[80px] pl-[15px]">Persons</span>
          <span className="mt-[5px] h-[30px] w-[71px] border border-t-2 border-[#2b2b2b] border-t-[#555] bg-[#363636] text-center leading-[27px]">More<Caret className="border-t-[#ff8226]" /></span>
        </nav>
        <div className="ml-auto mr-[20px] mt-[5px] flex">
          <span className="h-[30px] w-[82px] border border-t-2 border-[#2b2b2b] border-t-[#555] bg-[#363636] text-center leading-[27px]">English<Caret className="border-t-white" /></span>
          <span className="h-[30px] w-[186px] border border-[#111] bg-[#515151] pl-[14px] font-['Liberation_Sans',sans-serif] leading-[29px] tracking-[-0.1px] shadow-[0_1px_0_#333]">Search...</span>
        </div>
      </header>

      <div className="flex justify-between pl-5 pr-[22px] pt-[19px]">
        <main className="w-[1385px]">
          <div className="h-[138px] w-[1383px] bg-[#595959] pl-[19px] pt-[19px] text-white">
            <h1 className="text-[38.5px] leading-[38px] tracking-[-1.05px]">København/Hovedstaden</h1>
            <p className="mt-[11px] tracking-[-0.08px]">inkl. omr. 2, 3, 4 &amp; 7</p>
            <p className="mt-[11px] text-[12px] font-extrabold leading-5 tracking-[0.5px] [text-shadow:0_1px_1px_rgba(255,255,255,0.5)]">PLACE</p>
          </div>

          <PlaceMap />

          <div className="mt-[10px] flex h-[38px] border-b border-[#dcdcdc] leading-5">
            <span className="-mb-px w-[95px] border border-b-0 border-[#ddd] bg-white pl-3 pt-2 text-[#555]">1634–2011</span>
            <span className="w-[96.6px] pl-[15px] pt-[9px] text-[#0088cc]">1634–1847</span>
            <span className="w-[96.6px] pl-[15px] pt-[9px] text-[#0088cc]">1848–1917</span>
            <span className="w-[96.6px] pl-[15px] pt-[9px] text-[#0088cc]">1918–1991</span>
            <span className="w-[96.6px] pl-[15px] pt-[9px] text-[#0088cc]">1992–2011</span>
          </div>

          <article className="mt-5">
            <div className="mb-[10px]">
              <div className="flex justify-between">
                <Line narrow text="Som tak for indsatsen mod de svenske belejrere og mod enevældens fjender fik København titulært stilling som »fri rigsstad« ved kgl. privilegier af 1659 og 1661, der bestod til nytår 1840. Med en enevældig" />
                <span className="h-[18px] w-[66px] bg-[#999] text-center text-[12px] font-bold leading-[17px] tracking-[-0.32px] text-white [text-shadow:0_-1px_0_rgba(0,0,0,0.25)]">1634–1847</span>
              </div>
              {P1.map((t, i) => <Line key={i} text={t} narrow={i === 0} last={i === 3} />)}
            </div>
            <div className="mb-[10px]">{P2.map((t, i) => <Line key={i} text={t} last={i === 2} loose={i === 2} />)}</div>
            <div className="mb-[10px]">{P3.map((t, i) => <Line key={i} text={t} last={i === 1} />)}</div>
            <div className="text-center tracking-[-0.38px]">Københavns folketal og andel af kongerigets befolkning</div>
            {ROWS.map((r) => (
              <div key={r[0]} className="grid grid-cols-[100px_346px_234px_177px_311px_217px]">
                {r.map((c, i) => <span key={i} className={i === 0 ? "p-px" : "p-px text-right"}>{c}</span>)}
              </div>
            ))}
            <p className="whitespace-nowrap tracking-[-0.24px]">Anm.: Kbh. kommune, dog. incl. Chr.havn (indlemmet 1672).</p>
          </article>
        </main>

        <aside className="flex w-[428px] flex-col gap-[22px]">
          <section className="grid h-[78px] grid-cols-[174px_1fr] content-start gap-x-[15px] border border-[#efefef] bg-[#f5f5f5] pt-[18px]">
            <span className="text-right text-[11px] font-bold tracking-[-0.18px] text-[#999]">ID</span>
            <span>1</span>
            <span className="text-right text-[11px] font-bold tracking-[-0.18px] text-[#999]">PLACE GROUP</span>
            <span className="text-[#0088cc]">København</span>
          </section>
          <ListCard title="CATEGORIES" items={CATEGORIES} />
          <ListCard title="NEWSPAPERS" items={NEWSPAPERS} scroll />
          <ListCard title="PERSONS" items={PERSONS} scroll listClass="tracking-[-0.22px]" />
        </aside>
      </div>
    </div>
  );
}
